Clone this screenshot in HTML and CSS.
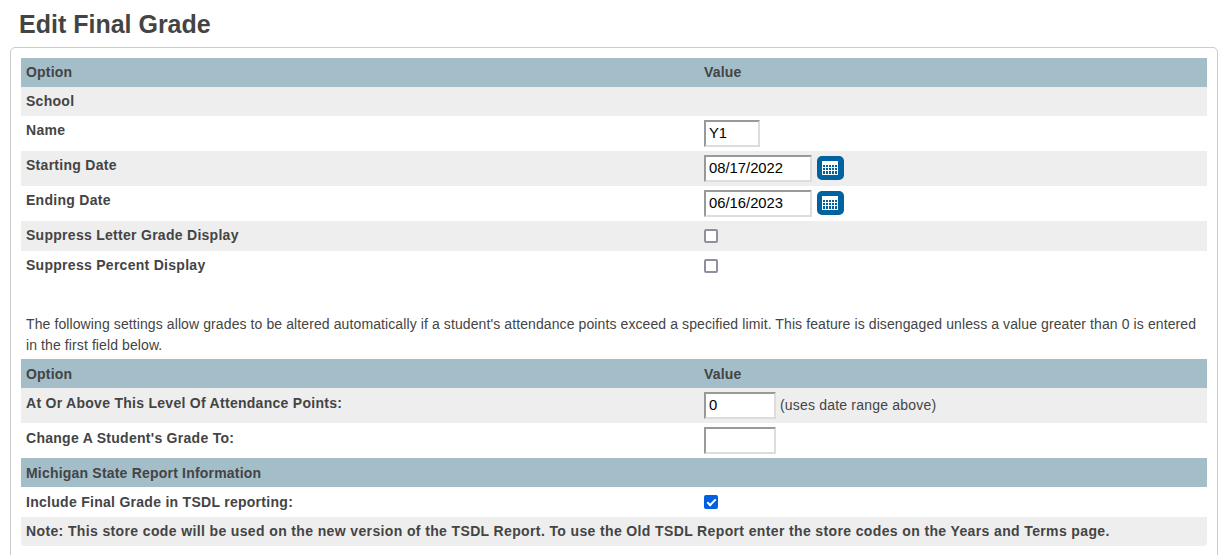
FILE: index.html
```html
<!DOCTYPE html>
<html lang="en">
  <head>
    <meta charset="UTF-8" />
    <title>Edit Final Grade</title>
    <link rel="stylesheet" href="styles.css">
  </head>
  <body>
    <h1 class="title">Edit Final Grade</h1>
    <div class="box">
      <table class="grid">
        <tr class="head"><th class="col-option">Option</th><th>Value</th></tr>
        <tr class="alt"><td class="label" colspan="2">School</td></tr>
        <tr class="tall">
          <td class="label">Name</td>
          <td class="value"><input class="field short" type="text" value="Y1" /></td>
        </tr>
        <tr class="tall alt">
          <td class="label">Starting Date</td>
          <td class="value">
            <input class="field date" type="text" value="08/17/2022" />
            <button class="cal" type="button">
              <svg width="16" height="14" viewBox="0 0 16 14"><path fill="#fff" fill-rule="evenodd" d="M0 0h16v14H0zM1 4v2h2V4zm3 0v2h2V4zm3 0v2h2V4zm3 0v2h2V4zm3 0v2h2V4zM1 7v2h2V7zm3 0v2h2V7zm3 0v2h2V7zm3 0v2h2V7zm3 0v2h2V7zM1 10v3h2v-3zm3 0v3h2v-3zm3 0v3h2v-3zm3 0v3h2v-3zm3 0v3h2v-3z"/></svg>
            </button>
          </td>
        </tr>
        <tr class="tall">
          <td class="label">Ending Date</td>
          <td class="value">
            <input class="field date" type="text" value="06/16/2023" />
            <button class="cal" type="button">
              <svg width="16" height="14" viewBox="0 0 16 14"><path fill="#fff" fill-rule="evenodd" d="M0 0h16v14H0zM1 4v2h2V4zm3 0v2h2V4zm3 0v2h2V4zm3 0v2h2V4zm3 0v2h2V4zM1 7v2h2V7zm3 0v2h2V7zm3 0v2h2V7zm3 0v2h2V7zm3 0v2h2V7zM1 10v3h2v-3zm3 0v3h2v-3zm3 0v3h2v-3zm3 0v3h2v-3zm3 0v3h2v-3z"/></svg>
            </button>
          </td>
        </tr>
        <tr class="check-row alt">
          <td class="label">Suppress Letter Grade Display</td>
          <td class="value"><input class="tick" type="checkbox" /></td>
        </tr>
        <tr class="check-row">
          <td class="label">Suppress Percent Display</td>
          <td class="value"><input class="tick" type="checkbox" /></td>
        </tr>
      </table>

      <p class="intro">The following settings allow grades to be altered automatically if a student's attendance points exceed a specified limit. This feature is disengaged unless a value greater than 0 is entered in the first field below.</p>

      <table class="grid lower">
        <tr class="head"><th class="col-option">Option</th><th>Value</th></tr>
        <tr class="tall alt">
          <td class="label">At Or Above This Level Of Attendance Points:</td>
          <td class="value"><input class="field mid" type="text" value="0" /> <span class="hint">(uses date range above)</span></td>
        </tr>
        <tr class="tall">
          <td class="label">Change A Student's Grade To:</td>
          <td class="value"><input class="field mid" type="text" /></td>
        </tr>
        <tr class="head"><th colspan="2">Michigan State Report Information</th></tr>
        <tr class="check-row">
          <td class="label">Include Final Grade in TSDL reporting:</td>
          <td class="value"><input class="tick" type="checkbox" checked /></td>
        </tr>
        <tr class="alt last"><td class="label note" colspan="2">Note: This store code will be used on the new version of the TSDL Report. To use the Old TSDL Report enter the store codes on the Years and Terms page.</td></tr>
      </table>
    </div>
  </body>
</html>
```

FILE: styles.css
```css
html, body {
  height: 555px;
  overflow: hidden;
}
body {
  margin: 0;
  padding: 0 10px;
  background-color: #fff;
  color: #444;
  font-family: "Liberation Sans", Arial, sans-serif;
  font-size: 14px;
  line-height: 15px;
}
.title {
  margin: 0;
  padding: 10px 9px 9px;
  font-size: 25px;
  line-height: 28px;
  font-weight: bold;
}
.box {
  border: 1px solid #ccc;
  border-radius: 5px;
  padding: 10px 10px 30px;
}
.grid {
  width: 100%;
  border-collapse: collapse;
  table-layout: fixed;
}
.grid th, .grid td {
  padding: 7px 5px;
  text-align: left;
  vertical-align: top;
}
.head th {
  background-color: #a3bdc9;
  font-weight: bold;
  letter-spacing: 0.2px;
}
.col-option {
  width: 668px;
}
.alt td {
  background-color: #eee;
}
.label {
  font-weight: bold;
  letter-spacing: 0.28px;
}
.note {
  letter-spacing: 0.37px;
}
.tall td {
  height: 21px;
}
.check-row td {
  height: 16px;
}
.tall .value {
  padding: 4px 5px;
}
.lower th, .lower .label {
  padding: 8px 5px 6px;
}
.lower .note {
  padding: 7px 5px;
}
.field {
  box-sizing: border-box;
  height: 27px;
  margin: 0;
  padding: 0 3px 2px;
  border: 2px solid;
  border-color: #999 #ddd #ddd #999;
  background-color: #fff;
  color: #000;
  font-family: "Liberation Sans", Arial, sans-serif;
  font-size: 14.8px;
  vertical-align: top;
}
.short {
  width: 56px;
}
.date {
  width: 108px;
}
.mid {
  width: 72px;
}
.cal {
  display: inline-flex;
  align-items: center;
  justify-content: center;
  width: 27px;
  height: 24px;
  margin: 1px 0 0 1px;
  padding: 0;
  border: none;
  border-radius: 5px;
  background-color: #00629f;
  vertical-align: top;
}
.hint {
  line-height: 27px;
  letter-spacing: 0.2px;
}
.tick {
  appearance: none;
  display: flex;
  align-items: center;
  justify-content: center;
  box-sizing: border-box;
  width: 14px;
  height: 14px;
  margin: 1px 0 0;
  border: 2px solid #8f8f9d;
  border-radius: 2px;
  background-color: #fff;
}
.tick:checked {
  border-color: #0060df;
  background-color: #0060df;
}
.tick:checked::after {
  content: "";
  width: 3px;
  height: 7px;
  margin-top: -2px;
  border: solid #fff;
  border-width: 0 2px 2px 0;
  transform: rotate(45deg);
}
.intro {
  margin: 0;
  padding: 33px 5px 3px;
  font-size: 14px;
  line-height: 21px;
  letter-spacing: 0.1px;
}
.last td {
  border-radius: 0 0 4px 4px;
}
```
